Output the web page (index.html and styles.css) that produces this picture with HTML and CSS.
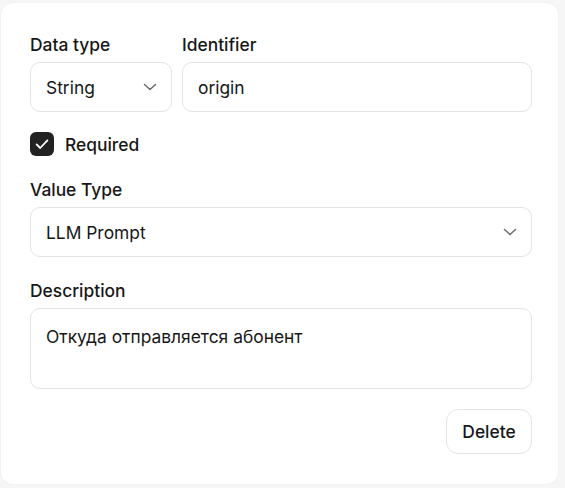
FILE: index.html
```html
<!DOCTYPE html>
<html>
<head>
<meta charset="utf-8">
<link rel="stylesheet" href="styles.css">
</head>
<body>
<div class="card">
  <div class="row">
    <div class="field field-type">
      <div class="label">Data type</div>
      <div class="control select">
        <span>String</span>
        <svg class="chev" width="14" height="8" viewBox="0 0 14 8"><path d="M1.5 1.5 L7 6.5 L12.5 1.5" fill="none" stroke="#6b6b6b" stroke-width="1.5" stroke-linecap="round" stroke-linejoin="round"/></svg>
      </div>
    </div>
    <div class="field field-id">
      <div class="label">Identifier</div>
      <div class="control"><span>origin</span></div>
    </div>
  </div>
  <div class="check-row">
    <div class="checkbox">
      <svg width="16" height="16" viewBox="0 0 16 16"><path d="M2.6 8.4 L6.2 12 L13.4 4.4" fill="none" stroke="#fff" stroke-width="1.8" stroke-linecap="round" stroke-linejoin="round"/></svg>
    </div>
    <span class="check-label">Required</span>
  </div>
  <div class="field block">
    <div class="label">Value Type</div>
    <div class="control select">
      <span>LLM Prompt</span>
      <svg class="chev" width="14" height="8" viewBox="0 0 14 8"><path d="M1.5 1.5 L7 6.5 L12.5 1.5" fill="none" stroke="#6b6b6b" stroke-width="1.5" stroke-linecap="round" stroke-linejoin="round"/></svg>
    </div>
  </div>
  <div class="field block">
    <div class="label">Description</div>
    <div class="control textarea"><span>Откуда отправляется абонент</span></div>
  </div>
  <div class="actions">
    <button class="btn">Delete</button>
  </div>
</div>
</body>
</html>
```
FILE: styles.css
```css
html, body {
  margin: 0;
  padding: 0;
  background: #f6f6f6;
}
body {
  font-family: Inter, "Noto Sans", sans-serif;
  color: #171717;
  width: 565px;
  height: 488px;
  overflow: hidden;
}
.card {
  box-sizing: border-box;
  margin: 3px 0 0 1px;
  width: 557px;
  height: 481px;
  background: #fff;
  border-radius: 12px;
  box-shadow: 0 0 2px rgba(0,0,0,0.06);
  padding: 31px 26px 0 29px;
}
.row {
  display: flex;
  gap: 10px;
}
.field-type { width: 142px; }
.field-id { flex: 1; }
.label {
  font-size: 17.4px;
  font-weight: 500;
  line-height: 21px;
  margin-bottom: 7px;
}
.control {
  box-sizing: border-box;
  height: 50px;
  border: 1px solid #e4e4e4;
  border-radius: 10px;
  display: flex;
  align-items: center;
  padding: 0 14px 0 15px;
  font-size: 17.4px;
}
.select { justify-content: space-between; }
.chev { display: block; }
.textarea {
  height: 81px;
  align-items: flex-start;
  padding-top: 17px;
}
.check-row {
  display: flex;
  align-items: center;
  margin-top: 20px;
  height: 24px;
}
.checkbox {
  width: 24px;
  height: 24px;
  border-radius: 6px;
  background: #222;
  display: flex;
  align-items: center;
  justify-content: center;
}
.checkbox svg { display: block; }
.check-label {
  margin-left: 11px;
  font-size: 17.4px;
  font-weight: 500;
}
.block { margin-top: 23px; }
.actions {
  display: flex;
  justify-content: flex-end;
  margin-top: 20px;
}
.btn {
  box-sizing: border-box;
  height: 45px;
  width: 86px;
  border: 1px solid #e4e4e4;
  border-radius: 12px;
  background: #fff;
  font-family: Inter, "Noto Sans", sans-serif;
  font-size: 17.4px;
  font-weight: 500;
  color: #171717;
}
```
